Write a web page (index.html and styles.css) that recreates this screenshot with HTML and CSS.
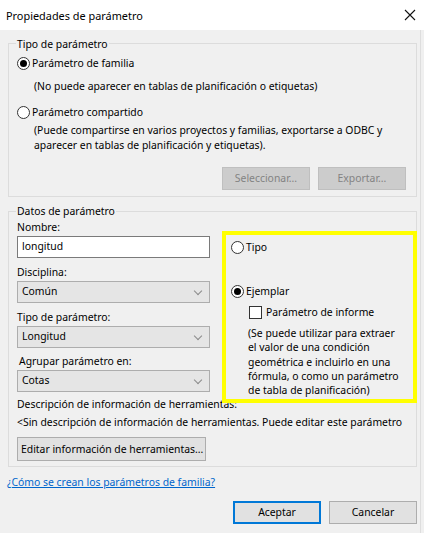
FILE: index.html
```html
<!DOCTYPE html>
<html lang="es">
<head>
  <meta charset="UTF-8">
  <title>Propiedades de parámetro</title>
  <link rel="stylesheet" href="styles.css">
</head>
<body>
  <!-- Title bar -->
  <div class="titlebar">
    <span class="title">Propiedades de parámetro</span>
    <svg class="close" width="12" height="12" viewBox="0 0 12 12">
      <path d="M1 1 L11 11 M11 1 L1 11" stroke="#111" stroke-width="1.1" fill="none"/>
    </svg>
  </div>

  <div class="dialog">
    <!-- Tipo de parámetro -->
    <div class="group group-type">
      <div class="group-title">Tipo de parámetro</div>
      <div class="radio-row first">
        <span class="radio checked"></span>
        <span>Parámetro de familia</span>
      </div>
      <div class="desc desc-family">(No puede aparecer en tablas de planificación o etiquetas)</div>
      <div class="radio-row second">
        <span class="radio"></span>
        <span>Parámetro compartido</span>
      </div>
      <div class="desc desc-shared">(Puede compartirse en varios proyectos y familias, exportarse a ODBC y<br>aparecer en tablas de planificación y etiquetas).</div>
      <div class="btn-row">
        <button class="btn disabled">Seleccionar...</button>
        <button class="btn disabled">Exportar...</button>
      </div>
    </div>

    <!-- Datos de parámetro -->
    <div class="group group-data">
      <div class="group-title">Datos de parámetro</div>
      <div class="data-left">
        <div class="field-label first">Nombre:</div>
        <div class="textbox">longitud</div>
        <div class="field-label">Disciplina:</div>
        <div class="combo"><span>Común</span><span class="chev"></span></div>
        <div class="field-label">Tipo de parámetro:</div>
        <div class="combo"><span>Longitud</span><span class="chev"></span></div>
        <div class="field-label indent">Agrupar parámetro en:</div>
        <div class="combo"><span>Cotas</span><span class="chev"></span></div>
      </div>
      <div class="tip-label">Descripción de información de herramientas:</div>
      <div class="tip-text">&lt;Sin descripción de información de herramientas. Puede editar este parámetro</div>
      <button class="btn edit-btn">Editar información de herramientas...</button>

      <!-- highlighted annotation box over the dialog -->
      <div class="highlight">
        <div class="radio-row">
          <span class="radio"></span>
          <span>Tipo</span>
        </div>
        <div class="radio-row ejemplar">
          <span class="radio checked"></span>
          <span>Ejemplar</span>
        </div>
        <div class="check-row">
          <span class="checkbox"></span>
          <span>Parámetro de informe</span>
        </div>
        <div class="report-desc">(Se puede utilizar para extraer<br>el valor de una condición<br>geométrica e incluirlo en una<br>fórmula, o como un parámetro<br>de tabla de planificación)</div>
      </div>
    </div>

    <a class="help-link" href="#">¿Cómo se crean los parámetros de familia?</a>

    <div class="footer">
      <button class="btn primary">Aceptar</button>
      <button class="btn">Cancelar</button>
    </div>
  </div>
</body>
</html>
```

FILE: styles.css
```css
* { box-sizing: border-box; }
body {
  margin: 0;
  background: #f0f0f0;
  font-family: "Noto Sans", "Open Sans", sans-serif;
  font-size: 10.4px;
  line-height: 15px;
  color: #000;
  overflow: hidden;
  height: 533px;
}

/* ---------- Title bar ---------- */
.titlebar {
  height: 30px;
  background: #fff;
  display: flex;
  align-items: center;
  justify-content: space-between;
  padding: 0 7px 0 6px;
}
.title { font-size: 10.9px; }
.close { margin-right: 1px; }

/* ---------- Dialog body ---------- */
.dialog {
  padding: 13px 3px 0 8px;
  border-right: 1px solid #dedede;
  margin-right: 3px;
  height: 503px;
}
.group {
  border: 1px solid #dcdcdc;
  padding: 0 10px 6px 8px;
  position: relative;
}
.group-title {
  width: fit-content;
  margin: -7px 0 0 -1px;
  padding: 0 1px;
  background: #f0f0f0;
}

/* radios */
.radio-row {
  display: flex;
  align-items: center;
  height: 16px;
  gap: 2px;
  white-space: nowrap;
}
.radio-row.first { margin-top: 3px; }
.radio-row.second { margin-top: 10px; }
.radio {
  width: 13px;
  height: 13px;
  border: 1px solid #333;
  border-radius: 50%;
  background: #fff;
  display: flex;
  align-items: center;
  justify-content: center;
  flex: none;
}
.radio.checked::after {
  content: "";
  width: 7px;
  height: 7px;
  border-radius: 50%;
  background: #000;
}
.desc { padding-left: 17px; white-space: nowrap; }
.desc-family { margin-top: 8px; }
.desc-shared { margin-top: 3px; }

/* buttons */
.btn-row {
  display: flex;
  justify-content: flex-end;
  gap: 8px;
  margin-top: 14px;
}
.btn {
  font: inherit;
  height: 23px;
  width: 88px;
  padding: 0 6px;
  background: #e1e1e1;
  border: 1px solid #adadad;
  color: #000;
  flex: none;
}
.btn.disabled {
  background: #cccccc;
  border-color: #bfbfbf;
  color: #838383;
}
.btn.primary {
  border: 2px solid #0078d7;
}

/* ---------- Datos de parámetro ---------- */
.group-data {
  margin-top: 14px;
  padding-bottom: 5px;
}
.group-data .group-title { margin-top: -8px; }
.data-left { width: 193px; }
.field-label { margin-top: 7px; white-space: nowrap; }
.field-label.first { margin-top: 1px; }
.field-label.indent { padding-left: 2px; margin-top: 6px; }
.textbox {
  height: 22px;
  margin-top: 1px;
  background: #fff;
  border: 1px solid #7a7a7a;
  padding: 2px 4px;
}
.combo {
  height: 22px;
  margin-top: 1px;
  background: #e5e5e5;
  border: 1px solid #adadad;
  padding: 2px 4px;
  display: flex;
  justify-content: space-between;
}
.combo .chev {
  width: 6px;
  height: 6px;
  border-right: 1px solid #8a8a8a;
  border-bottom: 1px solid #8a8a8a;
  transform: rotate(45deg);
  margin: 4px 4px 0 0;
}
.tip-label { margin-top: 5px; white-space: nowrap; }
.tip-text { margin-top: 3px; white-space: nowrap; }
.edit-btn {
  display: block;
  width: auto;
  height: 24px;
  margin-top: 7px;
  padding: 0 2px 0 3px;
}

/* yellow highlight annotation */
.highlight {
  position: absolute;
  left: 213px;
  top: 19px;
  width: 195px;
  height: 172px;
  border: 4px solid #ffff00;
  background: #f0f0f0;
  padding: 4px 4px 0 5px;
}
.highlight .ejemplar { margin-top: 28px; }
.check-row {
  display: flex;
  align-items: center;
  gap: 4px;
  margin-top: 5px;
  padding-left: 18px;
  height: 16px;
  white-space: nowrap;
}
.checkbox {
  width: 13px;
  height: 13px;
  border: 1px solid #333;
  background: #fff;
  flex: none;
}
.report-desc {
  padding-left: 17px;
  margin-top: 6px;
  line-height: 14.3px;
  white-space: nowrap;
}

/* ---------- Footer ---------- */
.help-link {
  display: block;
  width: fit-content;
  margin: 8px 0 0 -1px;
  color: #0066cc;
  text-decoration: underline;
}
.footer {
  display: flex;
  justify-content: flex-end;
  gap: 8px;
  margin-top: 11px;
}
```
